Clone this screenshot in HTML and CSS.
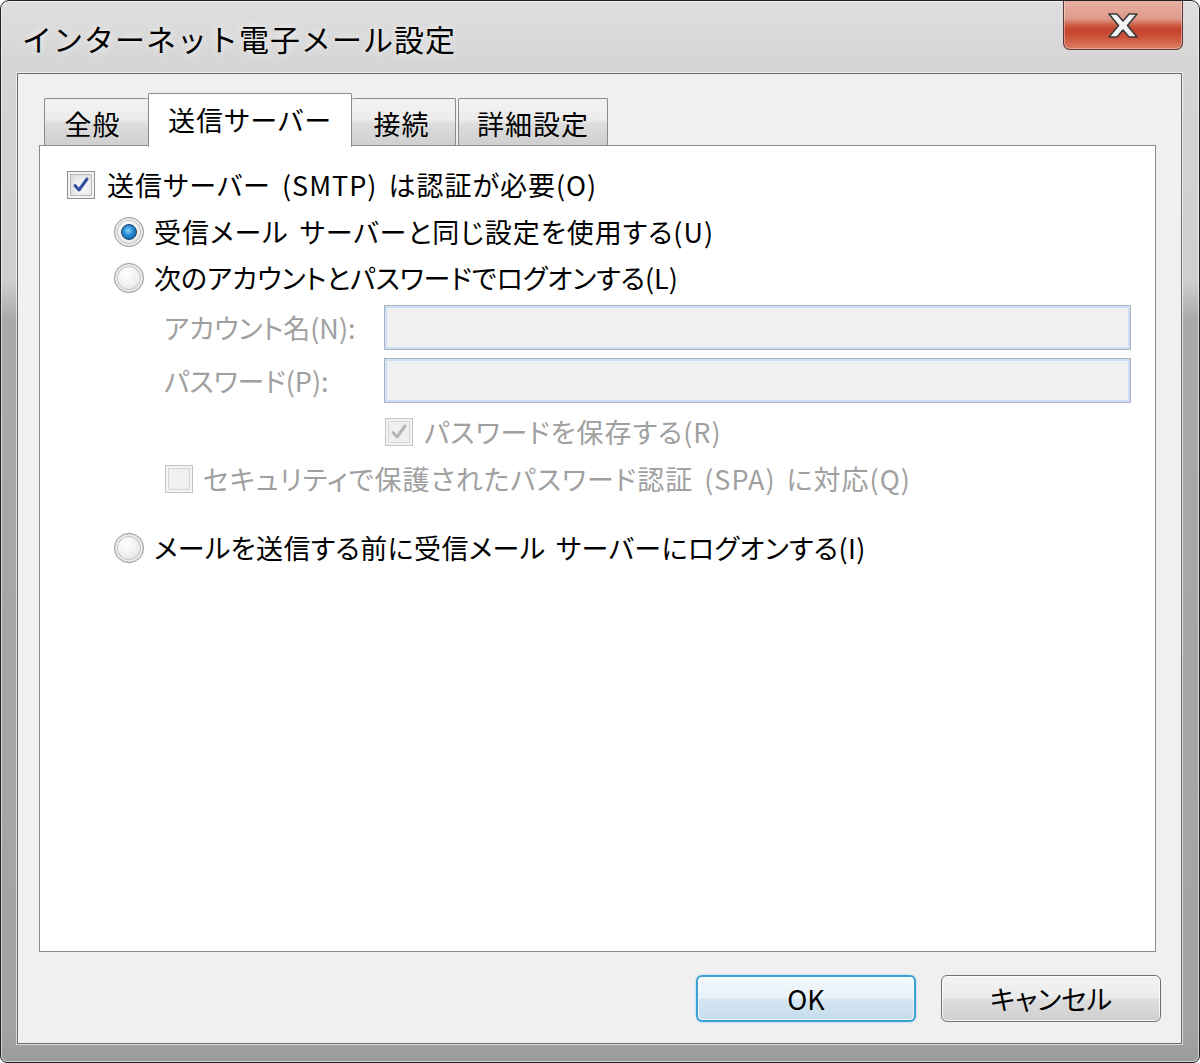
FILE: index.html
```html
<!DOCTYPE html>
<html lang="ja">
<head>
<meta charset="utf-8">
<title>インターネット電子メール設定</title>
<link rel="stylesheet" href="styles.css">
</head>
<body>
<div class="window">
  <div class="titlebar">
    <div class="title">インターネット電子メール設定</div>
    <div class="close">
      <svg width="30" height="25" viewBox="-1 -1 30 25">
        <polygon points="0,0 8,0 14,7 20,0 28,0 18.5,11.5 28,23 20,23 14,16 8,23 0,23 9.5,11.5" fill="#f4f4f4" stroke="#3a3a3a" stroke-width="1.6" stroke-linejoin="round"/>
      </svg>
    </div>
  </div>
  <div class="client">
    <div class="tabs">
      <div class="tab t1">全般</div>
      <div class="tab sel">送信サーバー</div>
      <div class="tab t3">接続</div>
      <div class="tab t4">詳細設定</div>
    </div>
    <div class="panel">
      <div class="row r1">
        <span class="cb"><svg width="18" height="18" viewBox="0 0 18 18"><path d="M3 9.5 L7 14 L15 3" fill="none" stroke="#33509c" stroke-width="3" stroke-linecap="round" stroke-linejoin="round"/></svg></span>
        <span class="lbl">送信サーバー (SMTP) は認証が必要(O)</span>
      </div>
      <div class="row r2">
        <span class="radio on"><span class="dot"></span></span>
        <span class="lbl">受信メール サーバーと同じ設定を使用する(U)</span>
      </div>
      <div class="row r3">
        <span class="radio"></span>
        <span class="lbl">次のアカウントとパスワードでログオンする(L)</span>
      </div>
      <div class="field f1">
        <span class="flabel dis">アカウント名(N):</span>
        <span class="input"></span>
      </div>
      <div class="field f2">
        <span class="flabel dis">パスワード(P):</span>
        <span class="input"></span>
      </div>
      <div class="row r-save">
        <span class="cb disabled"><svg width="18" height="18" viewBox="0 0 18 18"><path d="M3 9.5 L7 14 L15 3" fill="none" stroke="#b4b4b4" stroke-width="3" stroke-linecap="round" stroke-linejoin="round"/></svg></span>
        <span class="lbl dis">パスワードを保存する(R)</span>
      </div>
      <div class="row r-sec">
        <span class="cb disabled"></span>
        <span class="lbl dis">セキュリティで保護されたパスワード認証 (SPA) に対応(Q)</span>
      </div>
      <div class="row r4">
        <span class="radio"></span>
        <span class="lbl">メールを送信する前に受信メール サーバーにログオンする(I)</span>
      </div>
    </div>
    <div class="buttons">
      <button class="btn ok">OK</button>
      <button class="btn cancel">キャンセル</button>
    </div>
  </div>
</div>
</body>
</html>
```

FILE: styles.css
```css
html, body {
  margin: 0;
  padding: 0;
  background: #ffffff;
}

body {
  font-family: "Noto Sans CJK JP", "Noto Sans", sans-serif;
  font-size: 27px;
  color: #000;
}

.panel, .btn, .tab {
  font-feature-settings: "palt" 1;
}

.window {
  box-sizing: border-box;
  width: 1200px;
  height: 1063px;
  border: 1px solid #202020;
  border-radius: 9px 9px 7px 7px;
  box-shadow: inset 0 0 0 1px rgba(255,255,255,0.55);
  background: linear-gradient(to bottom, #dedede 0px, #d4d4d4 74px, #cfcfcf 280px, #a9a9a9 320px, #a3a3a3 1030px, #9a9a9a 100%);
  display: flex;
  flex-direction: column;
  overflow: hidden;
}

.titlebar {
  height: 72px;
  display: flex;
  justify-content: space-between;
  align-items: flex-start;
  flex: none;
}

.title {
  font-size: 30px;
  line-height: 30px;
  margin: 22px 0 0 21px;
  color: #000;
  text-shadow: 0 0 8px rgba(255,255,255,0.9);
  letter-spacing: 1px;
}

.close {
  box-sizing: border-box;
  width: 120px;
  height: 50px;
  margin: -1px 16px 0 0;
  border: 1px solid #5e3530;
  border-top: none;
  border-radius: 0 0 7px 7px;
  background: linear-gradient(to bottom, #e8b2a5 0%, #df9a8a 38%, #cd5a42 52%, #c6412a 62%, #cf5a40 80%, #dc8068 100%);
  box-shadow: inset 0 0 0 1px rgba(255,255,255,0.35);
  display: flex;
  align-items: center;
  justify-content: center;
  padding-top: 2px;
}

.client {
  flex: none;
  box-sizing: border-box;
  margin: 0 17px 0 16px;
  height: 971px;
  border: 1px solid #6c6c6c;
  box-shadow: 0 0 0 1px rgba(255,255,255,0.6);
  background: #f0f0f0;
  padding-top: 19px;
}

.tabs {
  height: 52px;
  margin-left: 26px;
  display: flex;
  align-items: flex-end;
}

.tab {
  box-sizing: border-box;
  height: 47px;
  border: 1px solid #898c95;
  border-bottom: none;
  border-radius: 2px 2px 0 0;
  background: linear-gradient(to bottom, #f3f3f3 0%, #ebebeb 45%, #dddddd 55%, #cfcfcf 100%);
  display: flex;
  align-items: center;
  justify-content: center;
  line-height: 1;
  padding-top: 2px;
  letter-spacing: 1px;
}

.t1 { width: 104px; border-right: none; padding-right: 8px; }
.t3 { width: 104px; border-left: none; padding-right: 4px; }
.t4 { width: 150px; margin-left: 2px; }

.tab.sel {
  width: 204px;
  height: 54px;
  margin-bottom: -2px;
  background: #ffffff;
  position: relative;
  z-index: 1;
  padding-top: 0;
  padding-bottom: 2px;
}

.panel {
  box-sizing: border-box;
  margin: 0 25px 0 21px;
  height: 807px;
  border: 1px solid #898c95;
  background: #ffffff;
  padding: 24px 0 0 27px;
}

.row {
  height: 30px;
  display: flex;
  align-items: center;
}

.lbl {
  line-height: 30px;
  white-space: nowrap;
  letter-spacing: 1px;
  word-spacing: 4px;
}

.dis { color: #a0a0a0; }

.r1 .lbl { margin-left: 12px; }
.r2 { margin-top: 17px; padding-left: 47px; }
.r3 { margin-top: 16px; padding-left: 47px; }
.r2 .lbl, .r3 .lbl, .r4 .lbl { margin-left: 10px; }
.r3 .lbl { letter-spacing: 0; }
.r4 { margin-top: 39px; padding-left: 47px; }
.r4 .lbl { letter-spacing: 0.4px; }

.r-save { margin-top: 14px; padding-left: 318px; }
.r-save .lbl { margin-left: 11px; }
.r-sec { margin-top: 17px; padding-left: 98px; }
.r-sec .lbl { margin-left: 10px; }

.field {
  height: 45px;
  display: flex;
  align-items: center;
  padding-left: 97px;
}
.f1 { margin-top: 12px; }
.f2 { margin-top: 8px; }

.flabel {
  width: 220px;
  white-space: nowrap;
}

.input {
  box-sizing: border-box;
  width: 747px;
  height: 45px;
  border: 1px solid #a9b3bf;
  box-shadow: inset 0 0 0 2px #cddff3;
  background: #f0f0f0;
}

.cb {
  box-sizing: border-box;
  width: 28px;
  height: 28px;
  border: 1px solid #8e8f8f;
  background: #f4f4f4;
  display: flex;
  align-items: center;
  justify-content: center;
  box-shadow: inset 0 0 0 2px #f4f4f4, inset 0 0 0 3px #b7bcc3, inset 2px 2px 6px 3px #d5d8dc;
  flex: none;
}

.cb.disabled {
  border-color: #c3c3c3;
  box-shadow: inset 0 0 0 2px #f4f4f4, inset 0 0 0 3px #d6d6d6;
  background: #f0f0f0;
}

.radio {
  box-sizing: border-box;
  width: 30px;
  height: 30px;
  border-radius: 50%;
  border: 1px solid #9a9a9a;
  background: radial-gradient(circle at 40% 35%, #ffffff 0%, #f0f0f0 45%, #d2d2d2 100%);
  box-shadow: inset 0 0 0 2px #ececec, inset 0 0 0 3px #c6c6c6, 0 0 1px #bbb;
  display: flex;
  align-items: center;
  justify-content: center;
  flex: none;
}

.radio .dot {
  width: 14px;
  height: 14px;
  border-radius: 50%;
  border: 1px solid #1c3f6a;
  background: radial-gradient(circle at 45% 40%, #8fd3ff 0%, #2b8fd6 40%, #0d4f8f 100%);
}

.buttons {
  margin-top: 23px;
  margin-right: 20px;
  display: flex;
  justify-content: flex-end;
  gap: 25px;
}

.btn {
  box-sizing: border-box;
  width: 220px;
  height: 47px;
  font-family: "Noto Sans CJK JP", "Noto Sans", sans-serif;
  font-size: 27px;
  color: #000;
  border: 1px solid #707070;
  border-radius: 6px;
  background: linear-gradient(to bottom, #f3f3f3 0%, #ebebeb 48%, #dddddd 52%, #cfcfcf 100%);
  box-shadow: inset 0 0 0 1px rgba(255,255,255,0.8);
  padding: 0;
  line-height: 1;
}

.btn.ok {
  border: 2px solid #3c9fd6;
  background: linear-gradient(to bottom, #f3f8fc 0%, #e8f2f9 48%, #d5e6f2 52%, #c6dcec 100%);
  box-shadow: inset 0 0 0 1px rgba(255,255,255,0.7), 0 0 2px #7fcff5;
}
```
